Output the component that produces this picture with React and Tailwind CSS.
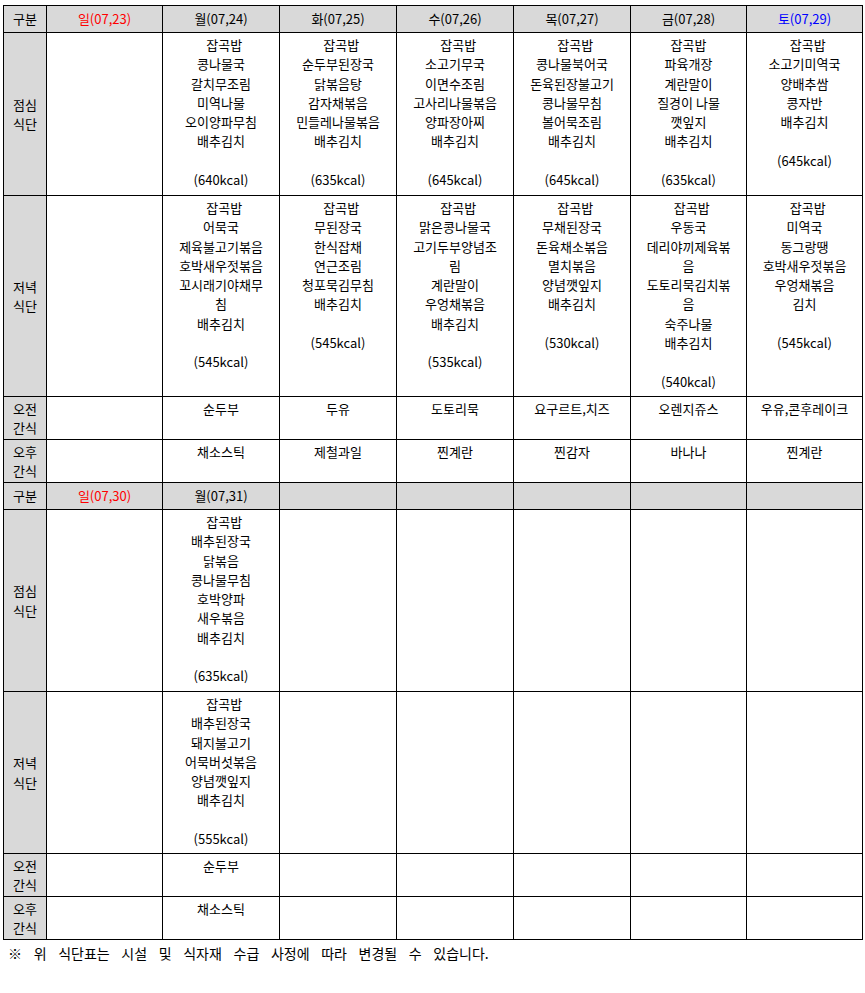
const B = '\u2002잡곡밥';

const weeks = [
  {
    days: [
      { label: '일(07,23)', tone: 'text-[#ff0000]' },
      { label: '월(07,24)' },
      { label: '화(07,25)' },
      { label: '수(07,26)' },
      { label: '목(07,27)' },
      { label: '금(07,28)' },
      { label: '토(07,29)', tone: 'text-[#0000ff]' },
    ],
    lunch: [
      [],
      [B, '콩나물국', '갈치무조림', '미역나물', '오이양파무침', '배추김치', '', '(640kcal)'],
      [B, '순두부된장국', '닭볶음탕', '감자채볶음', '민들레나물볶음', '배추김치', '', '(635kcal)'],
      [B, '소고기무국', '이면수조림', '고사리나물볶음', '양파장아찌', '배추김치', '', '(645kcal)'],
      [B, '콩나물북어국', '돈육된장불고기', '콩나물무침', '볼어묵조림', '배추김치', '', '(645kcal)'],
      ['잡곡밥', '파육개장', '계란말이', '질경이 나물', '깻잎지', '배추김치', '', '(635kcal)'],
      [B, '소고기미역국', '양배추쌈', '콩자반', '배추김치', '', '(645kcal)'],
    ],
    dinner: [
      [],
      [B, '어묵국', '제육불고기볶음', '호박새우젓볶음', '꼬시래기야채무', '침', '배추김치', '', '(545kcal)'],
      [B, '무된장국', '한식잡채', '연근조림', '청포묵김무침', '배추김치', '', '(545kcal)'],
      [B, '맑은콩나물국', '고기두부양념조', '림', '계란말이', '우엉채볶음', '배추김치', '', '(535kcal)'],
      [B, '무채된장국', '돈육채소볶음', '멸치볶음', '양념깻잎지', '배추김치', '', '(530kcal)'],
      [B, '우동국', '데리야끼제육볶', '음', '도토리묵김치볶', '음', '숙주나물', '배추김치', '', '(540kcal)'],
      [B, '미역국', '동그랑땡', '호박새우젓볶음', '우엉채볶음', '김치', '', '(545kcal)'],
    ],
    am: ['', '순두부', '두유', '도토리묵', '요구르트,치즈', '오렌지쥬스', '우유,콘후레이크'],
    pm: ['', '채소스틱', '제철과일', '찐계란', '찐감자', '바나나', '찐계란'],
    heights: ['h-[27px]', 'h-[163px]', 'h-[201px]', 'h-[43px]', 'h-[43px]'],
  },
  {
    days: [
      { label: '일(07,30)', tone: 'text-[#ff0000]' },
      { label: '월(07,31)' },
      { label: '' },
      { label: '' },
      { label: '' },
      { label: '' },
      { label: '' },
    ],
    lunch: [
      [],
      [B, '배추된장국', '닭볶음', '콩나물무침', '호박양파', '새우볶음', '배추김치', '', '(635kcal)'],
      [], [], [], [], [],
    ],
    dinner: [
      [],
      [B, '배추된장국', '돼지불고기', '어묵버섯볶음', '양념깻잎지', '배추김치', '', '(555kcal)'],
      [], [], [], [], [],
    ],
    am: ['', '순두부', '', '', '', '', ''],
    pm: ['', '채소스틱', '', '', '', '', ''],
    heights: ['h-[27px]', 'h-[182px]', 'h-[162px]', 'h-[43px]', 'h-[43px]'],
  },
];

const colWidths = ['w-[43px]', 'w-[116px]', 'w-[117px]', 'w-[117px]', 'w-[117px]', 'w-[117px]', 'w-[116px]', 'w-[116px]'];

const labelCell = 'border border-black bg-[#d9d9d9] text-center align-middle px-0 leading-[19.3px]';
const bodyCell = 'border border-black text-center align-top pt-[2px] px-[2px] leading-[19.3px]';

function Lines({ items }) {
  return items.map((line, i) => (
    <div key={i} className="whitespace-pre">{line === '' ? '\u00a0' : line}</div>
  ));
}

function Label({ top, bottom }) {
  return (
    <>
      <div>{top}</div>
      <div>{bottom}</div>
    </>
  );
}

function WeekRows({ week }) {
  const [hHead, hLunch, hDinner, hAm, hPm] = week.heights;
  return (
    <>
      <tr className={hHead}>
        <td className={labelCell}>구분</td>
        {week.days.map((d, i) => (
          <td key={i} className={`${labelCell} ${d.tone || ''}`}>{d.label}</td>
        ))}
      </tr>
      <tr className={hLunch}>
        <td className={labelCell}><Label top="점심" bottom="식단" /></td>
        {week.lunch.map((items, i) => (
          <td key={i} className={bodyCell}><Lines items={items} /></td>
        ))}
      </tr>
      <tr className={hDinner}>
        <td className={labelCell}><Label top="저녁" bottom="식단" /></td>
        {week.dinner.map((items, i) => (
          <td key={i} className={bodyCell}><Lines items={items} /></td>
        ))}
      </tr>
      <tr className={hAm}>
        <td className={labelCell}><Label top="오전" bottom="간식" /></td>
        {week.am.map((s, i) => (
          <td key={i} className={bodyCell}>{s}</td>
        ))}
      </tr>
      <tr className={hPm}>
        <td className={labelCell}><Label top="오후" bottom="간식" /></td>
        {week.pm.map((s, i) => (
          <td key={i} className={bodyCell}>{s}</td>
        ))}
      </tr>
    </>
  );
}

export default function App() {
  return (
    <div className="min-h-[993px] w-[865px] bg-white text-black text-[13px] font-['Noto_Sans_CJK_KR','Noto_Sans',sans-serif] pl-[3px] pt-[5px]">
      <table className="table-fixed border-collapse w-[860px]">
        <colgroup>
          {colWidths.map((w, i) => (
            <col key={i} className={w} />
          ))}
        </colgroup>
        <tbody>
          {weeks.map((week, i) => (
            <WeekRows key={i} week={week} />
          ))}
        </tbody>
      </table>
      <p className="mt-[4px] pl-[5px] text-[14px] leading-[19.3px] [word-spacing:8.5px]">
        ※ 위 식단표는 시설 및 식자재 수급 사정에 따라 변경될 수 있습니다.
      </p>
    </div>
  );
}
